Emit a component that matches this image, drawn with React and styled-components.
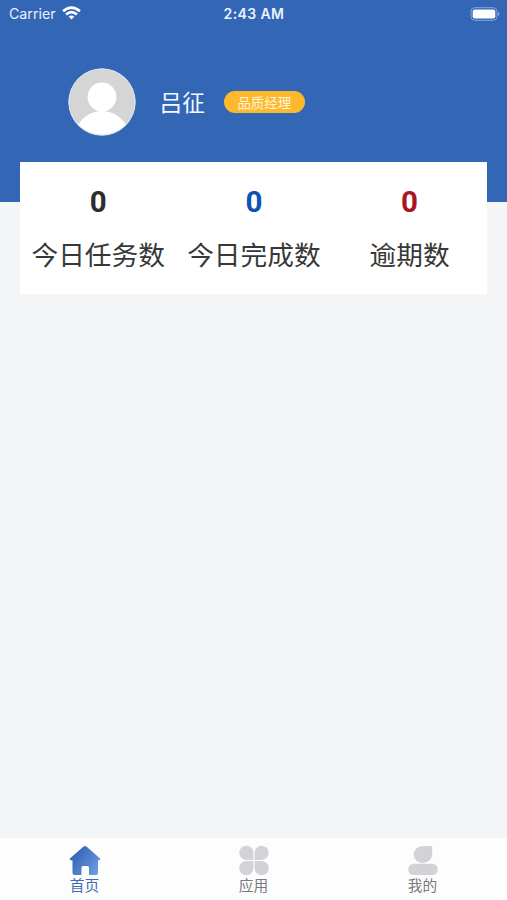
import React from "react";
import styled, { createGlobalStyle } from "styled-components";

const GlobalStyle = createGlobalStyle`
  * { box-sizing: border-box; }
  body {
    margin: 0;
    background: #f3f5f7;
    font-family: "Noto Sans CJK SC", "Liberation Sans", sans-serif;
  }
`;

const Screen = styled.div`
  display: flex;
  flex-direction: column;
  height: 900px;
  overflow: hidden;
`;

const Header = styled.header`
  flex: none;
  height: 202px;
  background: #3366b5;
  color: #fff;
`;

const StatusBar = styled.div`
  display: grid;
  grid-template-columns: 1fr auto 1fr;
  align-items: center;
  height: 28px;
  padding: 0 7px 0 9px;
  font-family: Inter, sans-serif;
  font-size: 14px;
  line-height: 28px;
  color: #e9f2ff;
`;

const Carrier = styled.div`
  display: flex;
  align-items: center;
  gap: 6px;
  font-size: 14.2px;
  svg { margin-top: -2px; }
`;

const Clock = styled.div`
  margin-left: -1px;
  font-weight: 600;
  letter-spacing: 0.4px;
`;

const Battery = styled.div`
  display: flex;
  justify-content: flex-end;
  svg { margin-top: -1px; }
`;

const Profile = styled.div`
  display: flex;
  align-items: center;
  height: 68px;
  margin-top: 40px;
  padding-left: 67.5px;
`;

const Name = styled.div`
  margin-left: 24px;
  font-size: 22.7px;
  line-height: 34px;
  color: #f4f8ff;
`;

const Role = styled.div`
  width: 81px;
  height: 22px;
  margin-left: 19px;
  border-radius: 11px;
  background: #fdb92e;
  color: #fff3d9;
  font-size: 13.5px;
  line-height: 22px;
  text-align: center;
`;

const StatsCard = styled.section`
  display: grid;
  grid-template-columns: repeat(3, 1fr);
  flex: none;
  height: 132px;
  margin: -40px 19.6px 0 20.4px;
  padding-top: 22px;
  border-radius: 0 0 2px 2px;
  background: #fff;
  z-index: 1;
`;

const Stat = styled.div`
  text-align: center;
  white-space: nowrap;
`;

const StatValue = styled.div`
  color: ${(p) => p.$color};
  font-family: Roboto, sans-serif;
  font-size: 29.5px;
  font-weight: 700;
  line-height: 37px;
`;

const StatLabel = styled.div`
  margin-top: 13px;
  font-size: 26.7px;
  line-height: 40px;
  color: #383838;
`;

const TabBar = styled.nav`
  display: grid;
  grid-template-columns: repeat(3, 1fr);
  height: 62px;
  margin-top: auto;
  background: #fdfdfd;
`;

const Tab = styled.div`
  display: flex;
  flex-direction: column;
  align-items: center;
  padding-top: 7px;
  font-size: 14.7px;
  line-height: 18px;
  color: ${(p) => (p.$active ? "#3c6cb4" : "#777b80")};
`;

const WifiIcon = () => (
  <svg width="19" height="14" viewBox="0 0 19 14" fill="none" stroke="#fff" strokeWidth="2.7">
    <path d="M1.1 5.2Q9.5-2.1 17.9 5.2" />
    <path d="M4.1 8.5Q9.5 3.9 14.9 8.5" />
    <path d="M6.6 10.6Q9.5 8.2 12.4 10.6L9.5 13.6Z" fill="#fff" stroke="none" />
  </svg>
);

const BatteryIcon = () => (
  <svg width="30" height="14" viewBox="0 0 30 14">
    <rect x="1" y="0.7" width="26" height="12.6" rx="3.7" fill="none" stroke="#84a8de" />
    <rect x="2.7" y="2.4" width="22.6" height="9.2" rx="2" fill="#fff" />
    <path d="M28 4.8Q31 7 28 9.2Z" fill="#84a8de" />
  </svg>
);

const Avatar = () => (
  <svg width="68" height="68" viewBox="0 0 68 68">
    <defs>
      <clipPath id="avatar-circle">
        <circle cx="34" cy="34" r="33" />
      </clipPath>
    </defs>
    <circle cx="34" cy="34" r="33.5" fill="#d5d5d5" />
    <g clipPath="url(#avatar-circle)" fill="#fff">
      <circle cx="34" cy="29" r="14.4" />
      <path d="M10 57Q19 43 34 43T58 57V68H10Z" />
    </g>
    <circle cx="34" cy="34" r="33.1" fill="none" stroke="#d9e3f4" />
  </svg>
);

const HomeIcon = () => (
  <svg width="32" height="31" viewBox="0 0 32 31">
    <defs>
      <linearGradient id="home-fill" x1="0" y1="0" x2="1" y2="0.7">
        <stop offset="0.15" stopColor="#2f60b2" />
        <stop offset="1" stopColor="#6a9ae2" />
      </linearGradient>
    </defs>
    <path
      d="M14.6 1.5Q16 .3 17.4 1.5L30.8 13.2Q32 15 30 15.2H29V28Q29 30 27 30H20V22.5Q20 21 18.5 21H14Q12.5 21 12.5 22.5V30H5.5Q3.5 30 3.5 28V15.2H2Q0 15 1.2 13.2Z"
      fill="url(#home-fill)"
    />
  </svg>
);

const AppsIcon = () => (
  <svg width="32" height="31" viewBox="0 0 32 31" fill="#d1d3d6">
    <path d="M15.4 14.9H8.2A7.1 7.1 0 1 1 15.4 7.8Z" />
    <path d="M16.6 14.9H23.8A7.1 7.1 0 1 0 16.6 7.8Z" />
    <path d="M15.4 16.1H8.2A7.1 7.1 0 1 0 15.4 23.2Z" />
    <path d="M16.6 16.1H23.8A7.1 7.1 0 1 1 16.6 23.2Z" />
  </svg>
);

const PersonIcon = () => (
  <svg width="32" height="31" viewBox="0 0 32 31" fill="#d1d3d6">
    <path d="M15.5 1H23.5Q25.2 1 25.2 2.7V9.5A9.3 8.5 0 1 1 15.5 1Z" />
    <rect x="1.3" y="18.7" width="29.4" height="11.3" rx="5.2" />
  </svg>
);

const stats = [
  { value: 0, label: "今日任务数", color: "#2d2d2d" },
  { value: 0, label: "今日完成数", color: "#0b53b4" },
  { value: 0, label: "逾期数", color: "#a91526" },
];

const tabs = [
  { label: "首页", Icon: HomeIcon, active: true },
  { label: "应用", Icon: AppsIcon },
  { label: "我的", Icon: PersonIcon },
];

export default function App() {
  return (
    <Screen>
      <GlobalStyle />
      <Header>
        <StatusBar>
          <Carrier>
            Carrier
            <WifiIcon />
          </Carrier>
          <Clock>2:43 AM</Clock>
          <Battery>
            <BatteryIcon />
          </Battery>
        </StatusBar>
        <Profile>
          <Avatar />
          <Name>吕征</Name>
          <Role>品质经理</Role>
        </Profile>
      </Header>
      <StatsCard>
        {stats.map((s) => (
          <Stat key={s.label}>
            <StatValue $color={s.color}>{s.value}</StatValue>
            <StatLabel>{s.label}</StatLabel>
          </Stat>
        ))}
      </StatsCard>
      <TabBar>
        {tabs.map(({ label, Icon, active }) => (
          <Tab key={label} $active={active}>
            <Icon />
            {label}
          </Tab>
        ))}
      </TabBar>
    </Screen>
  );
}
